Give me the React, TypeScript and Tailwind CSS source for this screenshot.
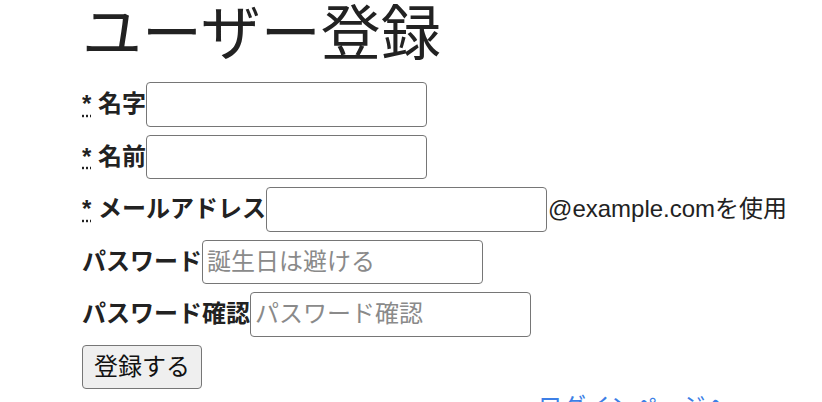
import React from "react";

const Req = () => (
  <>
    <abbr title="required" className="underline decoration-dotted underline-offset-[3px]">
      *
    </abbr>{" "}
  </>
);

export default function App() {
  const inputCls =
    "w-[281px] h-[44.5px] border border-[#767676] rounded-[4px] bg-white px-[4px] text-[24px] font-normal text-[#222] placeholder:text-[#8a8a8a] outline-none";
  return (
    <div className="w-[822px] h-[402px] overflow-hidden bg-white pl-[82px] text-[#222] font-['Liberation_Sans','Noto_Sans_CJK_JP',sans-serif]">
      <h1 className="m-0 text-[60px] leading-[70px] font-normal">ユーザー登録</h1>
      <form className="mt-[12px] flex flex-col gap-[8px]" onSubmit={(e) => e.preventDefault()}>
        <div className="flex items-center h-[44.5px]">
          <label className="text-[24px] font-bold whitespace-nowrap">
            <Req />名字
          </label>
          <input className={inputCls} />
        </div>
        <div className="flex items-center h-[44.5px]">
          <label className="text-[24px] font-bold whitespace-nowrap">
            <Req />名前
          </label>
          <input className={inputCls} />
        </div>
        <div className="flex items-center h-[44.5px]">
          <label className="text-[24px] font-bold whitespace-nowrap">
            <Req />メールアドレス
          </label>
          <input className={inputCls} />
          <span className="text-[24px] ml-[1px] whitespace-nowrap">@example.comを使用</span>
        </div>
        <div className="flex items-center h-[44.5px]">
          <label className="text-[24px] font-bold whitespace-nowrap">パスワード</label>
          <input type="password" className={inputCls} placeholder="誕生日は避ける" />
        </div>
        <div className="flex items-center h-[44.5px]">
          <label className="text-[24px] font-bold whitespace-nowrap">パスワード確認</label>
          <input type="password" className={inputCls} placeholder="パスワード確認" />
        </div>
        <div className="flex items-center h-[44.5px]">
          <button
            type="submit"
            className="h-[44.5px] w-[120px] border border-[#767676] rounded-[4px] bg-[#efefef] text-[24px] text-[#111]"
          >
            登録する
          </button>
        </div>
      </form>
      <div className="pl-[456px] mt-[2px]">
        <a href="#" className="text-[24px] leading-[32px] text-[#3d7fe6]">
          ログインページへ
        </a>
      </div>
    </div>
  );
}
